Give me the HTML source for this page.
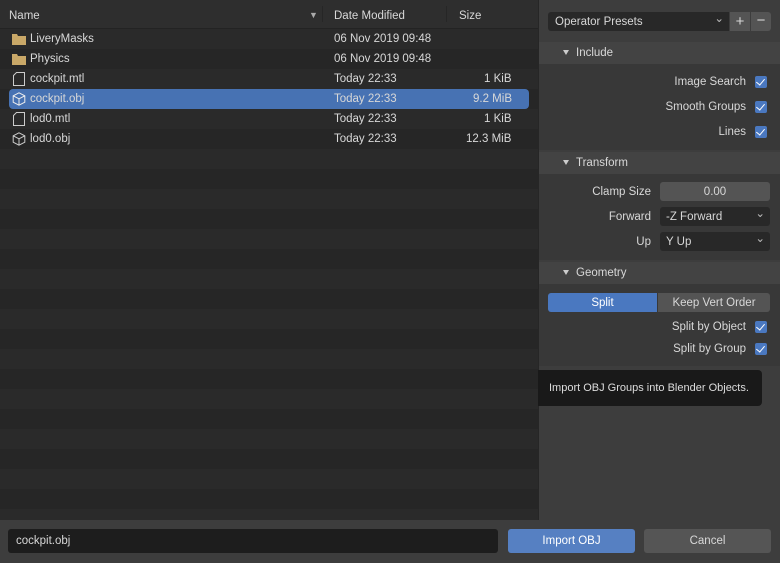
<!DOCTYPE html>
<html><head><style>
*{box-sizing:border-box;margin:0;padding:0}
body{width:780px;height:563px;background:#3d3d3d;font-family:"Liberation Sans","DejaVu Sans",sans-serif;font-size:11.5px;color:#d8d8d8;position:relative;overflow:hidden}
.abs{position:absolute}
#list{left:0;top:0;width:538px;height:520px;background:repeating-linear-gradient(#2a2a2a 0 20px,#262626 20px 40px);background-position:0 29px}
#hdr{left:0;top:0;width:538px;height:29px;background:#2e2e2e;border-bottom:1px solid #232323}
.row{position:absolute;left:0;width:538px;height:20px;line-height:21px}
.row span{position:absolute}
.sel{background:#4772b3;border-radius:4px;left:9px!important;width:520px!important}
#side{left:538px;top:0;width:242px;height:520px;background:#3d3d3d;border-left:1px solid #262626}
.sh{position:absolute;left:0;width:242px;height:22px;background:#434343;line-height:23px;padding-left:37px}
.sh:before{content:"";position:absolute;left:24px;top:8px;border-left:3px solid transparent;border-right:3px solid transparent;border-top:5px solid #ccc}
.sc{position:absolute;left:0;width:242px;background:#383838}
.lab{position:absolute;text-align:right;right:35px}
.cb{position:absolute;left:216px;width:12px;height:12px;background:#4a78c0;border-radius:2px}
.cb:after{content:"";position:absolute;left:3px;top:1px;width:4px;height:7px;border:solid #fff;border-width:0 1.5px 1.5px 0;transform:rotate(40deg)}
.fld{position:absolute;left:121px;width:110px;height:19px;background:#282828;border-radius:3px;line-height:20px;padding-left:6px}
.dd:after{content:"⌄";position:absolute;right:5px;top:-3px;color:#bbb}
.ic{position:absolute;left:12px;top:4px}
</style></head><body>
<div id="list" class="abs"></div>
<div id="hdr" class="abs">
<span class="abs" style="left:9px;top:10px">Name</span>
<span class="abs" style="left:309px;top:10px;font-size:9px;color:#aaa">▼</span>
<div class="abs" style="left:322px;top:6px;width:1px;height:16px;background:#262626"></div>
<span class="abs" style="left:334px;top:10px">Date Modified</span>
<div class="abs" style="left:446px;top:6px;width:1px;height:16px;background:#262626"></div>
<span class="abs" style="left:459px;top:10px">Size</span>
</div>
<div class="row" style="top:29px"><svg class="ic" width="14" height="12"><path d="M0 1h5l1 2h8v9H0z" fill="#c9a868"/></svg><span style="left:30px">LiveryMasks</span><span style="left:334px">06 Nov 2019 09:48</span></div>
<div class="row" style="top:49px"><svg class="ic" width="14" height="12"><path d="M0 1h5l1 2h8v9H0z" fill="#c9a868"/></svg><span style="left:30px">Physics</span><span style="left:334px">06 Nov 2019 09:48</span></div>
<div class="row" style="top:69px"><svg class="ic" width="14" height="14" style="top:3px"><path d="M4.5 .5h8v13h-11v-10z" fill="none" stroke="#ccc"/></svg><span style="left:30px">cockpit.mtl</span><span style="left:334px">Today 22:33</span><span style="left:484px">1 KiB</span></div>
<div class="row sel" style="top:89px"></div>
<div class="row" style="top:89px"><svg class="ic" width="14" height="14" style="top:3px"><path d="M7 .8l5.8 3v6.4L7 13.2 1.2 10.2V3.8zM1.2 3.8L7 6.8l5.8-3M7 6.8v6.4" fill="none" stroke="#eee"/></svg><span style="left:30px">cockpit.obj</span><span style="left:334px">Today 22:33</span><span style="left:473px">9.2 MiB</span></div>
<div class="row" style="top:109px"><svg class="ic" width="14" height="14" style="top:3px"><path d="M4.5 .5h8v13h-11v-10z" fill="none" stroke="#ccc"/></svg><span style="left:30px">lod0.mtl</span><span style="left:334px">Today 22:33</span><span style="left:484px">1 KiB</span></div>
<div class="row" style="top:129px"><svg class="ic" width="14" height="14" style="top:3px"><path d="M7 .8l5.8 3v6.4L7 13.2 1.2 10.2V3.8zM1.2 3.8L7 6.8l5.8-3M7 6.8v6.4" fill="none" stroke="#ccc"/></svg><span style="left:30px">lod0.obj</span><span style="left:334px">Today 22:33</span><span style="left:466px">12.3 MiB</span></div>

<div id="side" class="abs">
<div class="abs dd" style="left:9px;top:12px;width:181px;height:19px;background:#282828;border-radius:3px 0 0 3px;line-height:20px;padding-left:7px">Operator Presets</div>
<div class="abs" style="left:191px;top:12px;width:20px;height:19px;background:#545454;text-align:center;line-height:19px;font-size:15px">+</div>
<div class="abs" style="left:212px;top:12px;width:20px;height:19px;background:#545454;border-radius:0 3px 3px 0;text-align:center;line-height:18px;font-size:15px">−</div>
<div class="sh" style="top:42px">Include</div>
<div class="sc" style="top:64px;height:86px">
<span class="lab" style="top:12px">Image Search</span><div class="cb" style="top:12px"></div>
<span class="lab" style="top:37px">Smooth Groups</span><div class="cb" style="top:37px"></div>
<span class="lab" style="top:62px">Lines</span><div class="cb" style="top:62px"></div>
</div>
<div class="sh" style="top:152px">Transform</div>
<div class="sc" style="top:174px;height:86px">
<span class="lab" style="top:12px;right:130px">Clamp Size</span><div class="fld" style="top:8px;background:#545454;text-align:center;padding:0">0.00</div>
<span class="lab" style="top:37px;right:130px">Forward</span><div class="fld dd" style="top:33px">-Z Forward</div>
<span class="lab" style="top:62px;right:130px">Up</span><div class="fld dd" style="top:58px">Y Up</div>
</div>
<div class="sh" style="top:262px">Geometry</div>
<div class="sc" style="top:284px;height:82px">
<div class="abs" style="left:9px;top:9px;width:109px;height:19px;background:#4a78c0;border-radius:3px 0 0 3px;text-align:center;line-height:20px;color:#fff">Split</div>
<div class="abs" style="left:119px;top:9px;width:112px;height:19px;background:#545454;border-radius:0 3px 3px 0;text-align:center;line-height:20px">Keep Vert Order</div>
<span class="lab" style="top:37px">Split by Object</span><div class="cb" style="top:37px"></div>
<span class="lab" style="top:59px">Split by Group</span><div class="cb" style="top:59px"></div>
</div>
</div>
<div class="abs" style="left:538px;top:370px;width:224px;height:36px;background:#191919;border-radius:0 4px 4px 0;line-height:37px;padding-left:11px;color:#ddd;font-size:11px;white-space:nowrap">Import OBJ Groups into Blender Objects.</div>

<div class="abs" style="left:8px;top:529px;width:490px;height:24px;background:#1d1d1d;border-radius:3px;line-height:25px;padding-left:8px">cockpit.obj</div>
<div class="abs" style="left:508px;top:529px;width:127px;height:24px;background:#5680c2;border-radius:3px;line-height:25px;text-align:center;color:#fff">Import OBJ</div>
<div class="abs" style="left:644px;top:529px;width:127px;height:24px;background:#555;border-radius:3px;line-height:25px;text-align:center">Cancel</div>
</body></html>
